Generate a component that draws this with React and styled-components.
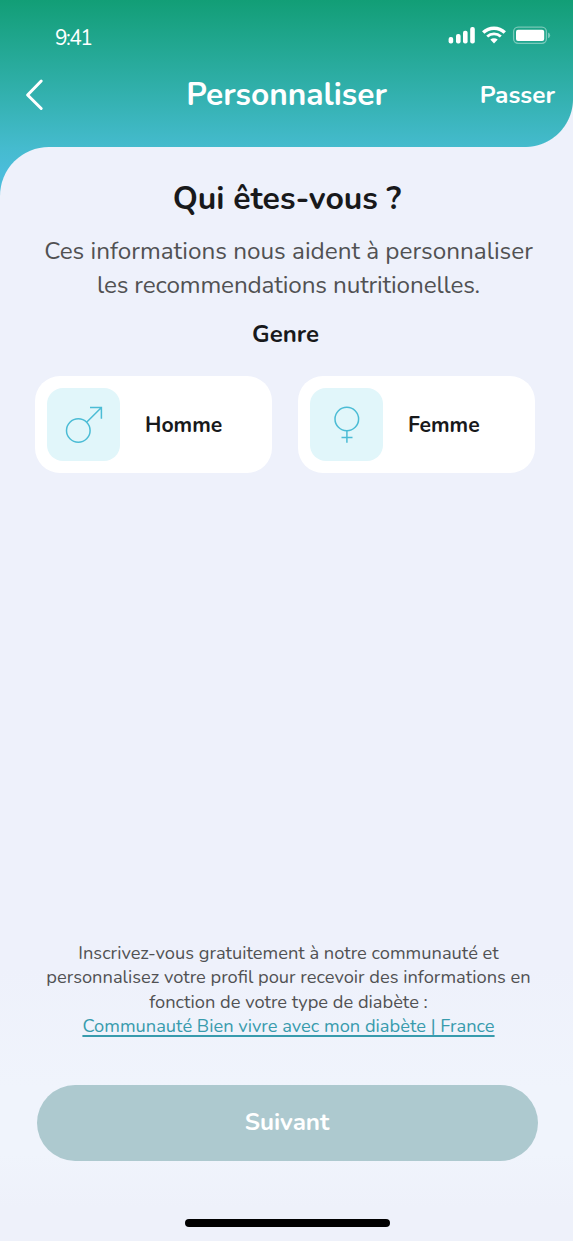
import styled, { createGlobalStyle } from "styled-components";

const GlobalStyle = createGlobalStyle`
  * {
    box-sizing: border-box;
  }
  body {
    margin: 0;
    font-family: "Nunito", "Lato", sans-serif;
    color: #18191b;
  }
`;

const Screen = styled.div`
  display: flex;
  flex-direction: column;
  width: 573px;
  height: 1241px;
  background: linear-gradient(to bottom, #129e76 0, #45bbce 148px, #4bbddb 172px, #4bbddb 210px, #eef1fb 210px);
`;

const StatusBar = styled.div`
  display: flex;
  justify-content: space-between;
  height: 60px;
  padding: 26px 21px 0 55px;
`;

const Time = styled.div`
  font-size: 21px;
  line-height: 24px;
  letter-spacing: -1.6px;
  color: #fff;
`;

const StatusIcons = styled.svg`
  display: block;
  width: 104px;
  height: 20px;
`;

const NavBar = styled.div`
  display: grid;
  grid-template-columns: 1fr auto 1fr;
  align-items: center;
  height: 87px;
  padding: 0 18px 17px 18px;
  color: #fff;
`;

const BackButton = styled.button`
  display: block;
  width: 22px;
  height: 34px;
  margin-left: 6px;
  padding: 0;
  border: none;
  background: none;
  color: inherit;
`;

const NavTitle = styled.h1`
  margin: 0;
  font-size: 31.7px;
  line-height: 40px;
`;

const SkipButton = styled.button`
  justify-self: end;
  padding: 0;
  border: none;
  background: none;
  color: inherit;
  font: 700 24.4px/32px "Nunito", "Lato", sans-serif;
`;

const Content = styled.main`
  position: relative;
  flex: 1;
  display: flex;
  flex-direction: column;
  align-items: center;
  padding: 31px 35px 0 36px;
  border-top-left-radius: 49px;
  background: linear-gradient(to bottom, #eef1fb 75%, #f0f4fc 86%, #f0f4fc 92%, #eef1fa 97%);

  /* rounds off the bottom right corner of the header */
  &::before {
    content: "";
    position: absolute;
    right: 0;
    top: -48px;
    width: 48px;
    height: 48px;
    background: radial-gradient(circle at 0 0, transparent 47.5px, #eef1fb 48.5px);
  }
`;

const Title = styled.h2`
  margin: 0;
  font-size: 32px;
  line-height: 42px;
`;

const Intro = styled.p`
  margin: 14px 0 0;
  padding-left: 3px;
  font-size: 24.3px;
  line-height: 34px;
  text-align: center;
  white-space: nowrap;
  color: #515153;
`;

const IntroEnd = styled.span`
  letter-spacing: -0.14px;
`;

const Label = styled.h3`
  margin: 16px 0 0;
  padding-right: 3px;
  font-size: 24px;
  line-height: 32px;
`;

const Choices = styled.div`
  display: flex;
  align-self: flex-start;
  gap: 26px;
  margin: 26px 0 0 -1px;
`;

const Choice = styled.button`
  display: flex;
  align-items: center;
  gap: 25px;
  width: 237px;
  height: 97px;
  padding: 0 12px;
  border: none;
  border-radius: 25px;
  background: #fff;
  color: inherit;
  font: 700 21.2px/28px "Nunito", "Lato", sans-serif;
`;

const ChoiceIcon = styled.span`
  display: flex;
  width: 73px;
  height: 73px;
  border-radius: 16px;
  background: #e1f6fa;
`;

const Notice = styled.p`
  margin: auto 0 0;
  padding-left: 3px;
  font-size: 18.3px;
  line-height: 24.4px;
  text-align: center;
  white-space: nowrap;
  color: #515153;
`;

const NoticeLink = styled.a`
  color: #389bad;
  text-decoration: underline;
  text-decoration-thickness: 1.5px;
  text-underline-offset: 3px;
`;

const NextButton = styled.button`
  width: 501px;
  height: 76px;
  margin-top: 46.4px;
  padding: 0 0 1px;
  border: none;
  border-radius: 38px;
  background: #adc9cf;
  color: #fff;
  font: 700 24.2px/32px "Nunito", "Lato", sans-serif;
`;

const HomeIndicator = styled.div`
  width: 205px;
  height: 8px;
  margin: 58px 0 14px;
  border-radius: 4px;
  background: #000;
`;

function MaleIcon() {
  return (
    <svg width="73" height="73" viewBox="0 0 73 73" fill="none" stroke="#4bbcd5" strokeWidth="1.5">
      <circle cx="31.3" cy="42.5" r="11.8" />
      <path d="M39.6 34.2 54.2 19.7M43 19.5h11.4v11.2" />
    </svg>
  );
}

function FemaleIcon() {
  return (
    <svg width="73" height="73" viewBox="0 0 73 73" fill="none" stroke="#4bbcd5" strokeWidth="1.5">
      <circle cx="36.8" cy="31" r="11.8" />
      <path d="M36.9 42.8v12M31.5 49.5h11" />
    </svg>
  );
}

export default function App() {
  return (
    <>
      <GlobalStyle />
      <Screen>
        <StatusBar>
          <Time>9:41</Time>
          <StatusIcons viewBox="0 0 104 20">
            <g fill="#fff">
              <rect x="0.6" y="11" width="4.6" height="6.4" rx="2" />
              <rect x="8" y="8" width="4.6" height="9.4" rx="2" />
              <rect x="15" y="4.7" width="4.6" height="12.7" rx="2" />
              <rect x="22.2" y="1" width="4.6" height="16.4" rx="2" />
              <rect x="68" y="3.7" width="28.2" height="11.3" rx="2" />
              <path d="M46 17.4 42.3 13.6c2.2-1.7 5.2-1.7 7.4 0z" />
            </g>
            <g fill="none" stroke="#fff">
              <path d="M35.2 6.6a15.6 15.6 0 0 1 21.6 0" strokeWidth="3.4" />
              <path d="M39.2 10.6a9.9 9.9 0 0 1 13.6 0" strokeWidth="2.8" />
            </g>
            <rect x="65.6" y="1.1" width="32.8" height="16.2" rx="4.5" fill="none" stroke="#fff" strokeWidth="1.3" opacity="0.4" />
            <path d="M100 6.5q2.2.8 2.2 2.9t-2.2 2.9z" fill="#fff" opacity="0.4" />
          </StatusIcons>
        </StatusBar>
        <NavBar>
          <BackButton aria-label="Retour">
            <svg width="22" height="34" viewBox="0 0 22 34" fill="none" stroke="#fff" strokeWidth="3" strokeLinecap="round" strokeLinejoin="round">
              <path d="M17.2 3 3.6 17l13.6 13.5" />
            </svg>
          </BackButton>
          <NavTitle>Personnaliser</NavTitle>
          <SkipButton>Passer</SkipButton>
        </NavBar>
        <Content>
          <Title>Qui êtes-vous ?</Title>
          <Intro>
            Ces informations nous aident à personnaliser
            <br />
            <IntroEnd>les recommendations nutritionelles.</IntroEnd>
          </Intro>
          <Label>Genre</Label>
          <Choices>
            <Choice>
              <ChoiceIcon>
                <MaleIcon />
              </ChoiceIcon>
              Homme
            </Choice>
            <Choice>
              <ChoiceIcon>
                <FemaleIcon />
              </ChoiceIcon>
              Femme
            </Choice>
          </Choices>
          <Notice>
            Inscrivez-vous gratuitement à notre communauté et
            <br />
            personnalisez votre profil pour recevoir des informations en
            <br />
            fonction de votre type de diabète :
            <br />
            <NoticeLink href="#">Communauté Bien vivre avec mon diabète | France</NoticeLink>
          </Notice>
          <NextButton>Suivant</NextButton>
          <HomeIndicator />
        </Content>
      </Screen>
    </>
  );
}
